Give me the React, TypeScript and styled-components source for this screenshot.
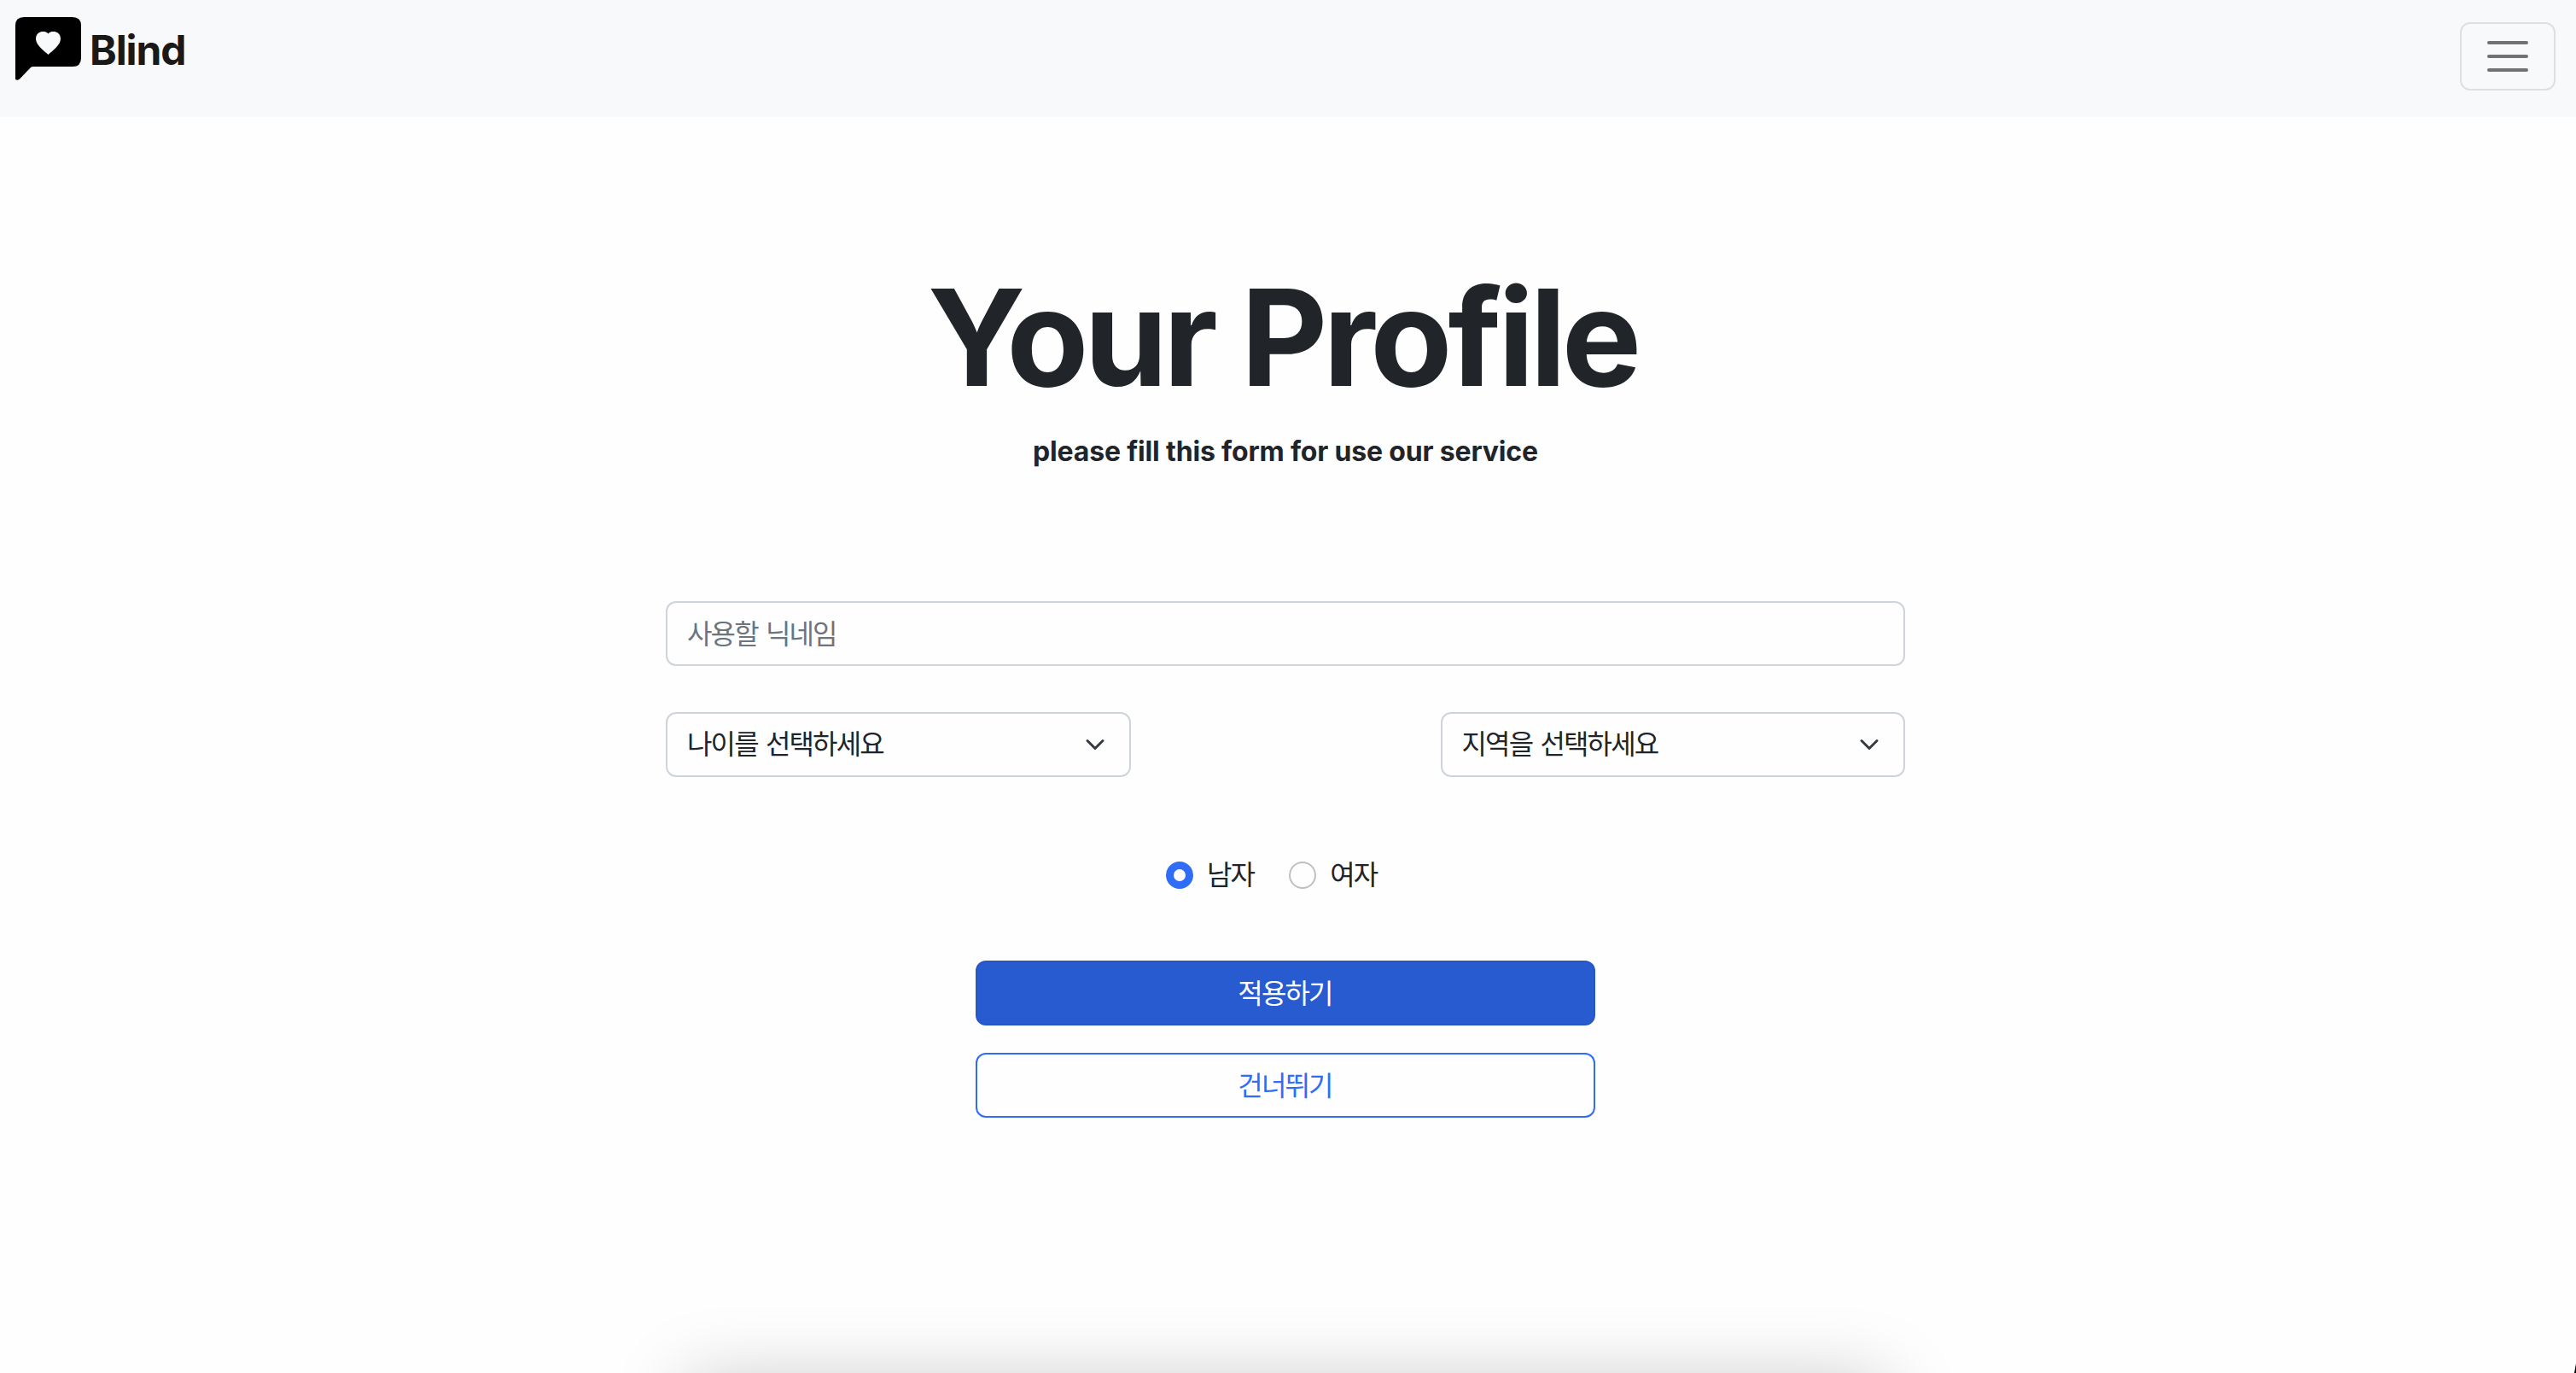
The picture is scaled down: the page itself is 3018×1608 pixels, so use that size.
import React, { FC } from "react";
import styled, { createGlobalStyle } from "styled-components";

const colors = {
  text: "#212529",
  muted: "#6c757d",
  border: "#ced4da",
  primary: "#306df6",
  primaryActive: "#285bcf",
  navbar: "#f8f9fb",
  page: "#fefefe"
};

const fonts = `Inter, "Noto Sans CJK KR", sans-serif`;

const GlobalStyle = createGlobalStyle`
  *, *::before, *::after {
    box-sizing: border-box;
  }

  body {
    margin: 0;
    background: ${colors.page};
    color: ${colors.text};
    font-family: ${fonts};
    font-size: 32px;
    line-height: 48px;
  }
`;

const Page = styled.div`
  position: relative;
  height: 1608px;
  overflow: hidden;
`;

const Navbar = styled.nav`
  display: flex;
  justify-content: space-between;
  align-items: flex-start;
  height: 137px;
  padding: 20px 24px 0 18px;
  background: ${colors.navbar};
`;

const Brand = styled.div`
  display: flex;
`;

const BrandName = styled.span`
  margin: 15px 0 0 10px;
  color: #191919;
  font-size: 48px;
  font-weight: 700;
  line-height: 48px;
  letter-spacing: -1.1px;
`;

const MenuButton = styled.button`
  display: flex;
  justify-content: center;
  align-items: center;
  width: 112px;
  height: 80px;
  margin-top: 6px;
  padding: 0;
  border: 2px solid #dedfe1;
  border-radius: 12px;
  background: transparent;
`;

const Main = styled.main`
  display: flex;
  flex-direction: column;
  align-items: center;
  width: 1452px;
  margin-left: 780px;
  padding-top: 178px;
`;

const Title = styled.h1`
  margin: 0 7px 0 0;
  font-size: 157px;
  font-weight: 700;
  line-height: 160px;
  letter-spacing: -5.15px;
  white-space: nowrap;
`;

const Subtitle = styled.p`
  margin: 30px 0 0;
  font-size: 32px;
  font-weight: 700;
  line-height: 48px;
  letter-spacing: -0.17px;
  white-space: nowrap;
`;

const Form = styled.form`
  display: flex;
  flex-direction: column;
  width: 100%;
  margin-top: 151px;
  letter-spacing: -1.85px;
  word-spacing: 2px;
`;

const NicknameInput = styled.input`
  width: 100%;
  height: 76px;
  padding: 0 23px;
  border: 2px solid ${colors.border};
  border-radius: 12px;
  background: transparent;
  font-family: ${fonts};
  font-size: 32px;
  letter-spacing: inherit;
  word-spacing: inherit;

  &::placeholder {
    color: ${colors.muted};
    opacity: 1;
  }
`;

const SelectRow = styled.div`
  display: flex;
  justify-content: space-between;
  margin-top: 54px;
`;

const Select = styled.div`
  display: flex;
  justify-content: space-between;
  align-items: center;
  width: 37.5%;
  height: 76px;
  padding: 0 28px 0 23px;
  border: 2px solid ${colors.border};
  border-radius: 12px;
`;

const RadioRow = styled.div`
  display: flex;
  gap: 41px;
  margin: 91px 0 0 586px;
`;

const RadioLabel = styled.label`
  display: flex;
  align-items: center;
  gap: 16px;
`;

const Radio = styled.input.attrs({ type: "radio" })`
  appearance: none;
  width: 32px;
  height: 32px;
  margin: 0;
  border: 2px solid #bfbfbf;
  border-radius: 50%;

  &:checked {
    border: 9px solid ${colors.primary};
  }
`;

const Buttons = styled.div`
  display: flex;
  flex-direction: column;
  gap: 32px;
  width: 50%;
  margin: 76px auto 0;
`;

const Button = styled.button<{ $outline?: boolean }>`
  height: 76px;
  padding: 0 1px 5px 0;
  border: 2px solid ${p => (p.$outline ? colors.primary : "#2657c5")};
  border-radius: 12px;
  background: ${p => (p.$outline ? "transparent" : colors.primaryActive)};
  color: ${p => (p.$outline ? colors.primary : "#fff")};
  font-family: ${fonts};
  font-size: 32px;
  letter-spacing: inherit;
`;

const BottomShadow = styled.div`
  position: absolute;
  top: 1618px;
  left: 804px;
  width: 1406px;
  height: 120px;
  box-shadow: 0 0 88px rgba(0, 0, 0, 0.22);
`;

// dark sliver where the rounded window corner begins
const WindowCorner = styled.div`
  position: absolute;
  right: 0;
  bottom: 0;
  width: 2px;
  height: 11px;
  background: #000;
  clip-path: polygon(100% 0, 100% 100%, 0 100%);
`;

const LogoIcon: FC = () => (
  <svg width="77" height="74" viewBox="0 0 77 74">
    <path d="M10 0H67Q77 0 77 10V48Q77 58 67 58H21Q19 58 18 59L5 72.500Q3 74.500 0 73V10Q0 0 10 0Z" />
    <path
      fill={colors.navbar}
      d="M38.500 44C34 40 24 33 24 25.500C24 19 29 17 32 17C35 17 37 17.500 38.500 19.500C40 17.500 42 17 45 17C48 17 53 19 53 25.500C53 33 43 40 38.500 44Z"
    />
  </svg>
);

const MenuIcon: FC = () => (
  <svg width="60" height="60" viewBox="0 0 30 30" fill="none">
    <path
      d="M4 7h22M4 15h22M4 23h22"
      stroke="#727272"
      strokeWidth="2"
      strokeLinecap="round"
      strokeMiterlimit="10"
    />
  </svg>
);

const ChevronIcon: FC = () => (
  <svg width="24" height="24" viewBox="0 0 16 16" fill="none">
    <path
      d="m2 5 6 6 6-6"
      stroke="#343a40"
      strokeWidth="2"
      strokeLinecap="round"
      strokeLinejoin="round"
    />
  </svg>
);

const App: FC = () => (
  <>
    <GlobalStyle />
    <Page>
      <Navbar>
        <Brand>
          <LogoIcon />
          <BrandName>Blind</BrandName>
        </Brand>
        <MenuButton type="button" aria-label="Menu">
          <MenuIcon />
        </MenuButton>
      </Navbar>
      <Main>
        <Title>Your Profile</Title>
        <Subtitle>please fill this form for use our service</Subtitle>
        <Form>
          <NicknameInput placeholder="사용할 닉네임" />
          <SelectRow>
            <Select>
              나이를 선택하세요
              <ChevronIcon />
            </Select>
            <Select>
              지역을 선택하세요
              <ChevronIcon />
            </Select>
          </SelectRow>
          <RadioRow>
            <RadioLabel>
              <Radio name="gender" defaultChecked />
              남자
            </RadioLabel>
            <RadioLabel>
              <Radio name="gender" />
              여자
            </RadioLabel>
          </RadioRow>
          <Buttons>
            <Button type="button">적용하기</Button>
            <Button type="button" $outline>
              건너뛰기
            </Button>
          </Buttons>
        </Form>
      </Main>
      <BottomShadow />
      <WindowCorner />
    </Page>
  </>
);

export default App;
